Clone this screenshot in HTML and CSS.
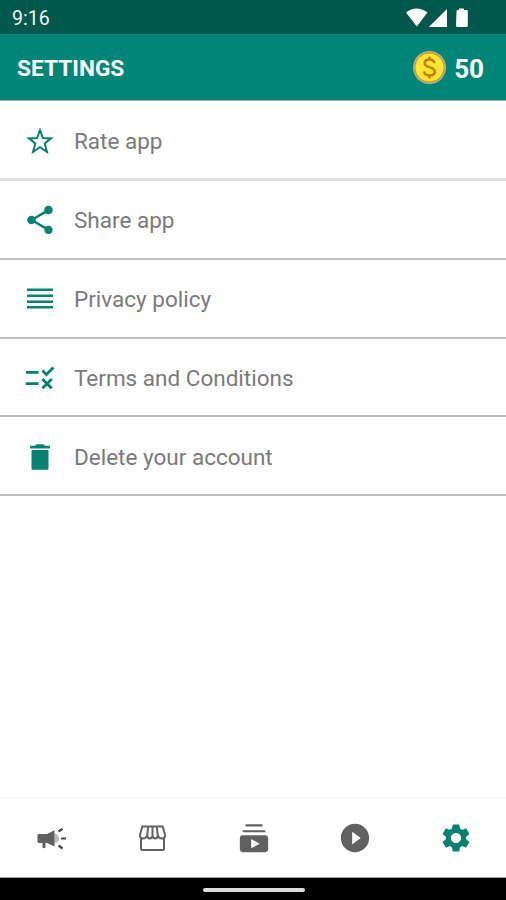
FILE: index.html
```html
<!DOCTYPE html>
<html lang="en">
<head>
<meta charset="utf-8">
<title>Settings</title>
<link rel="stylesheet" href="styles.css">
</head>
<body>
<div class="status">
  <span class="time">9:16</span>
  <svg class="indicators" width="64" height="20" viewBox="0 0 64 20" fill="#fff">
    <path d="M0 4.500Q10.500-3.500 21.500 4.500L10.800 18.500Z"/>
    <path d="M41 1V19H22.800Z"/>
    <path d="M50.500 3Q50.500 2 51.500 2H53V.600H58V2H60.500Q61.800 2 61.800 3V17.500Q61.800 19 60.500 19H51.500Q50 19 50 17.500Z"/>
  </svg>
</div>
<header class="bar">
  <h1 class="title">SETTINGS</h1>
  <div class="coins">
    <svg class="coin" width="34" height="34" viewBox="0 0 34 34">
      <circle cx="17.500" cy="17.500" r="16.500" fill="#aeb79a"/>
      <circle cx="17.500" cy="17.500" r="15.200" fill="#dd8f2c"/>
      <circle cx="17.500" cy="17.500" r="14" fill="#ffe82f"/>
      <path d="M22.500 13.100C22 10.200 20 9.400 17.500 9.400C14.700 9.400 12.700 10.900 12.700 13.200C12.700 18.500 22.800 15.700 22.800 21.500C22.800 24.100 20.500 25.500 17.500 25.500C14.500 25.500 12.400 24.100 12.200 21.400M17.500 6.700V9.500M17.500 25.500V28.500" fill="none" stroke="#c97908" stroke-width="2.500"/>
    </svg>
    <span class="amount">50</span>
  </div>
</header>
<main class="list">
  <a class="row first">
    <svg class="icon" viewBox="0 0 34 34"><path d="M17 6.200L19.900 14.100L28 14.400L21.700 19.400L24 28L17 23.200L10 28L12.300 19.400L6 14.400L14.100 14.100Z" fill="none" stroke="#058272" stroke-width="2"/></svg>
    <span>Rate app</span>
  </a>
  <a class="row">
    <svg class="icon" viewBox="0 0 24 24"><path d="M18 16.080c-.76 0-1.440.3-1.960.77L8.910 12.700c.05-.23.090-.46.090-.7s-.040-.47-.090-.7l7.050-4.110c.54.5 1.250.81 2.040.81 1.660 0 3-1.340 3-3s-1.340-3-3-3-3 1.340-3 3c0 .24.040.47.090.7L8.040 9.810C7.500 9.310 6.790 9 6 9c-1.660 0-3 1.340-3 3s1.340 3 3 3c.79 0 1.500-.31 2.040-.81l7.120 4.160c-.05.21-.08.43-.08.65 0 1.610 1.310 2.920 2.920 2.920s2.920-1.310 2.920-2.920-1.310-2.920-2.920-2.920z"/></svg>
    <span>Share app</span>
  </a>
  <a class="row">
    <svg class="icon" viewBox="0 0 34 34"><path d="M4 6.500h26v2.500H4zM4 12.500h26v2.500H4zM4 18.500h26v2.500H4zM4 24h26v2.500H4z"/></svg>
    <span>Privacy policy</span>
  </a>
  <a class="row">
    <svg class="icon" viewBox="0 0 24 24"><path d="M16.540 11L13 7.460l1.410-1.410 2.120 2.120 4.240-4.240 1.410 1.410L16.540 11zM11 7H2v2h9V7zm10 6.410L19.590 12 17 14.590 14.410 12 13 13.410 15.590 16 13 18.590 14.410 20 17 17.410 19.590 20 21 18.590 18.410 16 21 13.410zM11 15H2v2h9v-2z"/></svg>
    <span>Terms and Conditions</span>
  </a>
  <a class="row">
    <svg class="icon" viewBox="0 0 24 24"><path d="M6 20.200c0 .5.300.8.800.8h10.400c.5 0 .8-.3.800-.8V7H6v13.200zM19 4h-3.500l-1-1h-5l-1 1H5v2h14V4z"/></svg>
    <span>Delete your account</span>
  </a>
</main>
<nav class="tabs">
  <a class="tab">
    <svg class="icon" viewBox="0 0 34 34">
      <path d="M19.500 12.500Q24 13.500 24 17.300T19.500 22.500Z" fill="#bbb"/>
      <path d="M2.500 14Q2.500 13 3.500 13H12L19.500 9.300V25.500L12 22H10.500V26.500Q8.500 28 7.500 26.500V22H4Q2.500 22 2.500 20.500Z"/>
      <path d="M23.500 10.500L27.500 7.800M26 17.500H31M23.500 24.500L27.500 27.500" fill="none" stroke="#444" stroke-width="2.200"/>
    </svg>
  </a>
  <a class="tab">
    <svg class="icon" viewBox="0 0 34 34" fill="none" stroke="#616161" stroke-width="2">
      <path d="M6.300 5.500H26.700L29.200 14.500Q29 17.500 26 17.500Q23 17.500 21.800 14.500Q21.500 17.500 19.200 17.500Q16.800 17.500 16.500 14.500Q16.200 17.500 13.800 17.500Q11.500 17.500 11.200 14.500Q10 17.500 7 17.500Q4 17.500 3.800 14.500ZM12.200 5.500L11.200 14.500M16.500 5.500V14.500M20.800 5.500L21.800 14.500M5 17.500V27.500Q5 29 6.500 29H26.500Q28 29 28 27.500V17.500"/>
    </svg>
  </a>
  <a class="tab">
    <svg class="icon" viewBox="0 0 24 24"><path d="M20 8H4V6.500h16V8zm-2-4.200H6V2.300h12V3.800zm4 8.200v8c0 1.100-.9 2-2 2H4c-1.100 0-2-.9-2-2v-8c0-1.100.9-2 2-2h16c1.100 0 2 .9 2 2zm-6 4l-6-3.270v6.530L16 16z"/></svg>
  </a>
  <a class="tab">
    <svg class="icon" viewBox="0 0 24 24"><path d="M12 2C6.480 2 2 6.480 2 12s4.480 10 10 10 10-4.480 10-10S17.520 2 12 2zm-2 14.500v-9l6 4.500-6 4.500z"/></svg>
  </a>
  <a class="tab active">
    <svg class="icon gear" viewBox="0 0 24 24"><path d="M19.140 12.940c.04-.3.060-.61.060-.94 0-.32-.02-.64-.07-.94l2.030-1.580c.18-.14.23-.41.120-.61l-1.920-3.320c-.12-.22-.37-.29-.59-.22l-2.390.96c-.5-.38-1.030-.7-1.620-.94l-.36-2.540c-.04-.24-.24-.41-.48-.41h-3.840c-.24 0-.43.170-.47.410l-.36 2.540c-.59.240-1.130.570-1.620.94l-2.390-.96c-.22-.08-.47 0-.59.220L2.740 8.870c-.12.210-.08.470.12.610l2.030 1.580c-.05.3-.09.630-.09.940s.02.640.07.940l-2.030 1.580c-.18.140-.23.410-.12.610l1.920 3.320c.12.220.37.290.59.220l2.390-.96c.5.380 1.030.7 1.620.94l.36 2.540c.05.240.24.410.48.410h3.840c.24 0 .44-.17.47-.41l.36-2.540c.59-.24 1.130-.56 1.620-.94l2.390.96c.22.080.47 0 .59-.22l1.920-3.320c.12-.22.070-.47-.12-.61l-2.010-1.580zM12 15.600c-1.980 0-3.600-1.620-3.600-3.600s1.620-3.600 3.600-3.600 3.600 1.620 3.600 3.600-1.620 3.600-3.600 3.600z"/></svg>
  </a>
</nav>
<footer class="home"><div class="pill"></div></footer>
</body>
</html>
```
FILE: styles.css
```css
* { box-sizing: border-box; }
body {
  margin: 0;
  width: 506px;
  height: 900px;
  display: flex;
  flex-direction: column;
  background: #fff;
  font-family: Roboto, "Liberation Sans", sans-serif;
  overflow: hidden;
}
.status {
  height: 34px;
  flex: none;
  display: flex;
  align-items: center;
  justify-content: space-between;
  padding: 2px 36px 0 12px;
  background: #00574b;
}
.time { color: #f2f8f6; font-size: 19.500px; line-height: 24px; padding-top: 1px; }
.indicators { margin-top: -1px; }
.bar {
  height: 67px;
  flex: none;
  display: flex;
  align-items: center;
  justify-content: space-between;
  padding: 0 22px 0 17px;
  background: #018577;
  border-bottom: 1px solid #8cb8b0;
  color: #fff;
}
.title { margin: 4px 0 0; font-size: 22.700px; font-weight: 700; line-height: 28px; }
.coins { display: flex; align-items: center; gap: 8px; }
.coin { display: block; }
.amount { font-size: 26px; font-weight: 700; line-height: 30px; padding-top: 3px; }
.list { flex: 1; }
.row {
  display: flex;
  align-items: center;
  height: 78.750px;
  padding: 2px 23px 0 23px;
  gap: 17px;
  border-bottom: 2px solid #c0c0c0;
  color: #7a7a7a;
  font-size: 22.500px;
}
.first { height: 80px; padding-top: 3px; border-bottom: 3px solid #dedede; }
.icon { display: block; flex: none; width: 34px; height: 34px; fill: #058272; }
.tabs {
  height: 81px;
  flex: none;
  display: flex;
  align-items: center;
  padding: 0 0 0 1px;
  border-top: 2px solid #fafafa;
  border-bottom: 1px solid #999;
}
.tab { flex: 1; display: flex; justify-content: center; }
.tab .icon { fill: #616161; }
.tab .icon[fill="none"] { fill: none; }
.tab.active .icon { fill: #058272; }
.home {
  height: 22px;
  flex: none;
  display: flex;
  align-items: center;
  justify-content: center;
  background: #000;
}
.pill { width: 102px; height: 4px; margin: 2px 0 0 2px; border-radius: 2px; background: #ddd; }
```
